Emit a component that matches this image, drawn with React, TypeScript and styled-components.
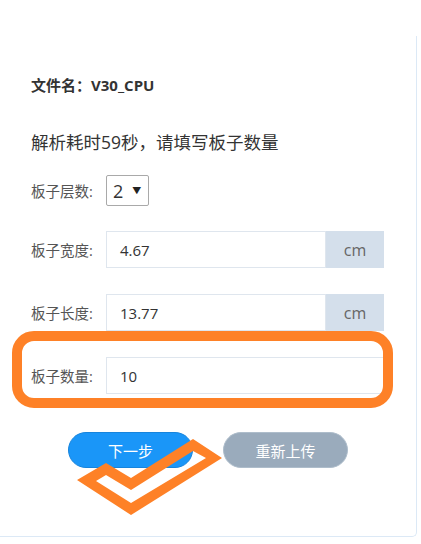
import React from "react";
import styled, { createGlobalStyle } from "styled-components";

const Global = createGlobalStyle`
  html, body { margin: 0; padding: 0; background: #fff; }
  body { font-family: "Open Sans", "Noto Sans CJK SC", sans-serif; color: #333; }
`;

const Card = styled.div`
  margin-top: 36px;
  width: 417px;
  height: 501px;
  box-sizing: border-box;
  border-right: 1px solid #dce9f6;
  border-bottom: 1px solid #dce9f6;
  border-bottom-right-radius: 5px;
  padding: 39px 0 0 31px;
  position: relative;
`;

const Title = styled.div`
  font-size: 15px;
  font-weight: 700;
  line-height: 20px;
  color: #333;
`;

const Hint = styled.div`
  margin-top: 35px;
  font-size: 17.5px;
  line-height: 24px;
  color: #333;
`;

const Row = styled.div<{ $top: number; $highlight?: boolean }>`
  display: flex;
  width: max-content;
  align-items: center;
  margin-top: ${(p) => p.$top}px;
  position: relative;
  ${(p) =>
    p.$highlight &&
    `
    &::after {
      content: "";
      position: absolute;
      left: -19px;
      right: -9px;
      top: -26px;
      bottom: -14px;
      border: 10px solid #fe8127;
      border-radius: 22px;
      pointer-events: none;
    }
  `}
`;

const Label = styled.div`
  width: 75px;
  flex: none;
  font-size: 14.5px;
  color: #555;
  white-space: nowrap;
`;

const FakeSelect = styled.div`
  width: 43px;
  height: 31px;
  box-sizing: border-box;
  border: 1px solid #a9a9a9;
  border-radius: 2px;
  display: flex;
  align-items: center;
  padding-left: 6px;
  gap: 9px;
  font-size: 18px;
  color: #333;
`;

const Arrow = styled.span`
  font-size: 9px;
  color: #222;
`;

const InputGroup = styled.div<{ $width: number }>`
  display: flex;
  width: ${(p) => p.$width}px;
  height: 37px;
`;

const Input = styled.div`
  flex: 1;
  box-sizing: border-box;
  border: 1px solid #dfe6ee;
  display: flex;
  align-items: center;
  padding-left: 13px;
  font-size: 15px;
  color: #333;
`;

const Addon = styled.div`
  width: 58px;
  background: #d4dfeb;
  display: flex;
  align-items: center;
  justify-content: center;
  font-size: 16px;
  color: #666;
`;

const Buttons = styled.div`
  margin: 38px 0 0 -31px;
  display: flex;
  justify-content: center;
  gap: 30px;
  position: relative;
`;

const Button = styled.div<{ $color: string; $border: string }>`
  width: 125px;
  height: 36px;
  box-sizing: border-box;
  border-radius: 18px;
  background: ${(p) => p.$color};
  border: 1px solid ${(p) => p.$border};
  color: #fff;
  font-size: 15px;
  display: flex;
  align-items: center;
  justify-content: center;
`;

const Check = styled.svg`
  position: absolute;
  left: 77px;
  top: 7px;
  width: 145px;
  height: 77px;
  pointer-events: none;
`;

export default function App() {
  return (
    <>
      <Global />
      <Card>
        <Title>文件名：V30_CPU</Title>
        <Hint>解析耗时59秒，请填写板子数量</Hint>
        <Row $top={21}>
          <Label>板子层数:</Label>
          <FakeSelect>
            2<Arrow>▼</Arrow>
          </FakeSelect>
        </Row>
        <Row $top={25}>
          <Label>板子宽度:</Label>
          <InputGroup $width={278}>
            <Input>4.67</Input>
            <Addon>cm</Addon>
          </InputGroup>
        </Row>
        <Row $top={26}>
          <Label>板子长度:</Label>
          <InputGroup $width={278}>
            <Input>13.77</Input>
            <Addon>cm</Addon>
          </InputGroup>
        </Row>
        <Row $top={26} $highlight>
          <Label>板子数量:</Label>
          <InputGroup $width={278}>
            <Input>10</Input>
          </InputGroup>
        </Row>
        <Buttons>
          <Button $color="#1a96f8" $border="#1784dc">下一步</Button>
          <Button $color="#9aabbc" $border="#aebdcb">重新上传</Button>
          <Check viewBox="77 438 145 77">
            <path
              fillRule="evenodd"
              fill="#fe8127"
              d="M77 479 L106 462 L131 477 L193 438 L222 457 L131 514 Z M96 480 L106 474 L131 489 L193 450 L206 457 L131 502 Z"
            />
          </Check>
        </Buttons>
      </Card>
    </>
  );
}
